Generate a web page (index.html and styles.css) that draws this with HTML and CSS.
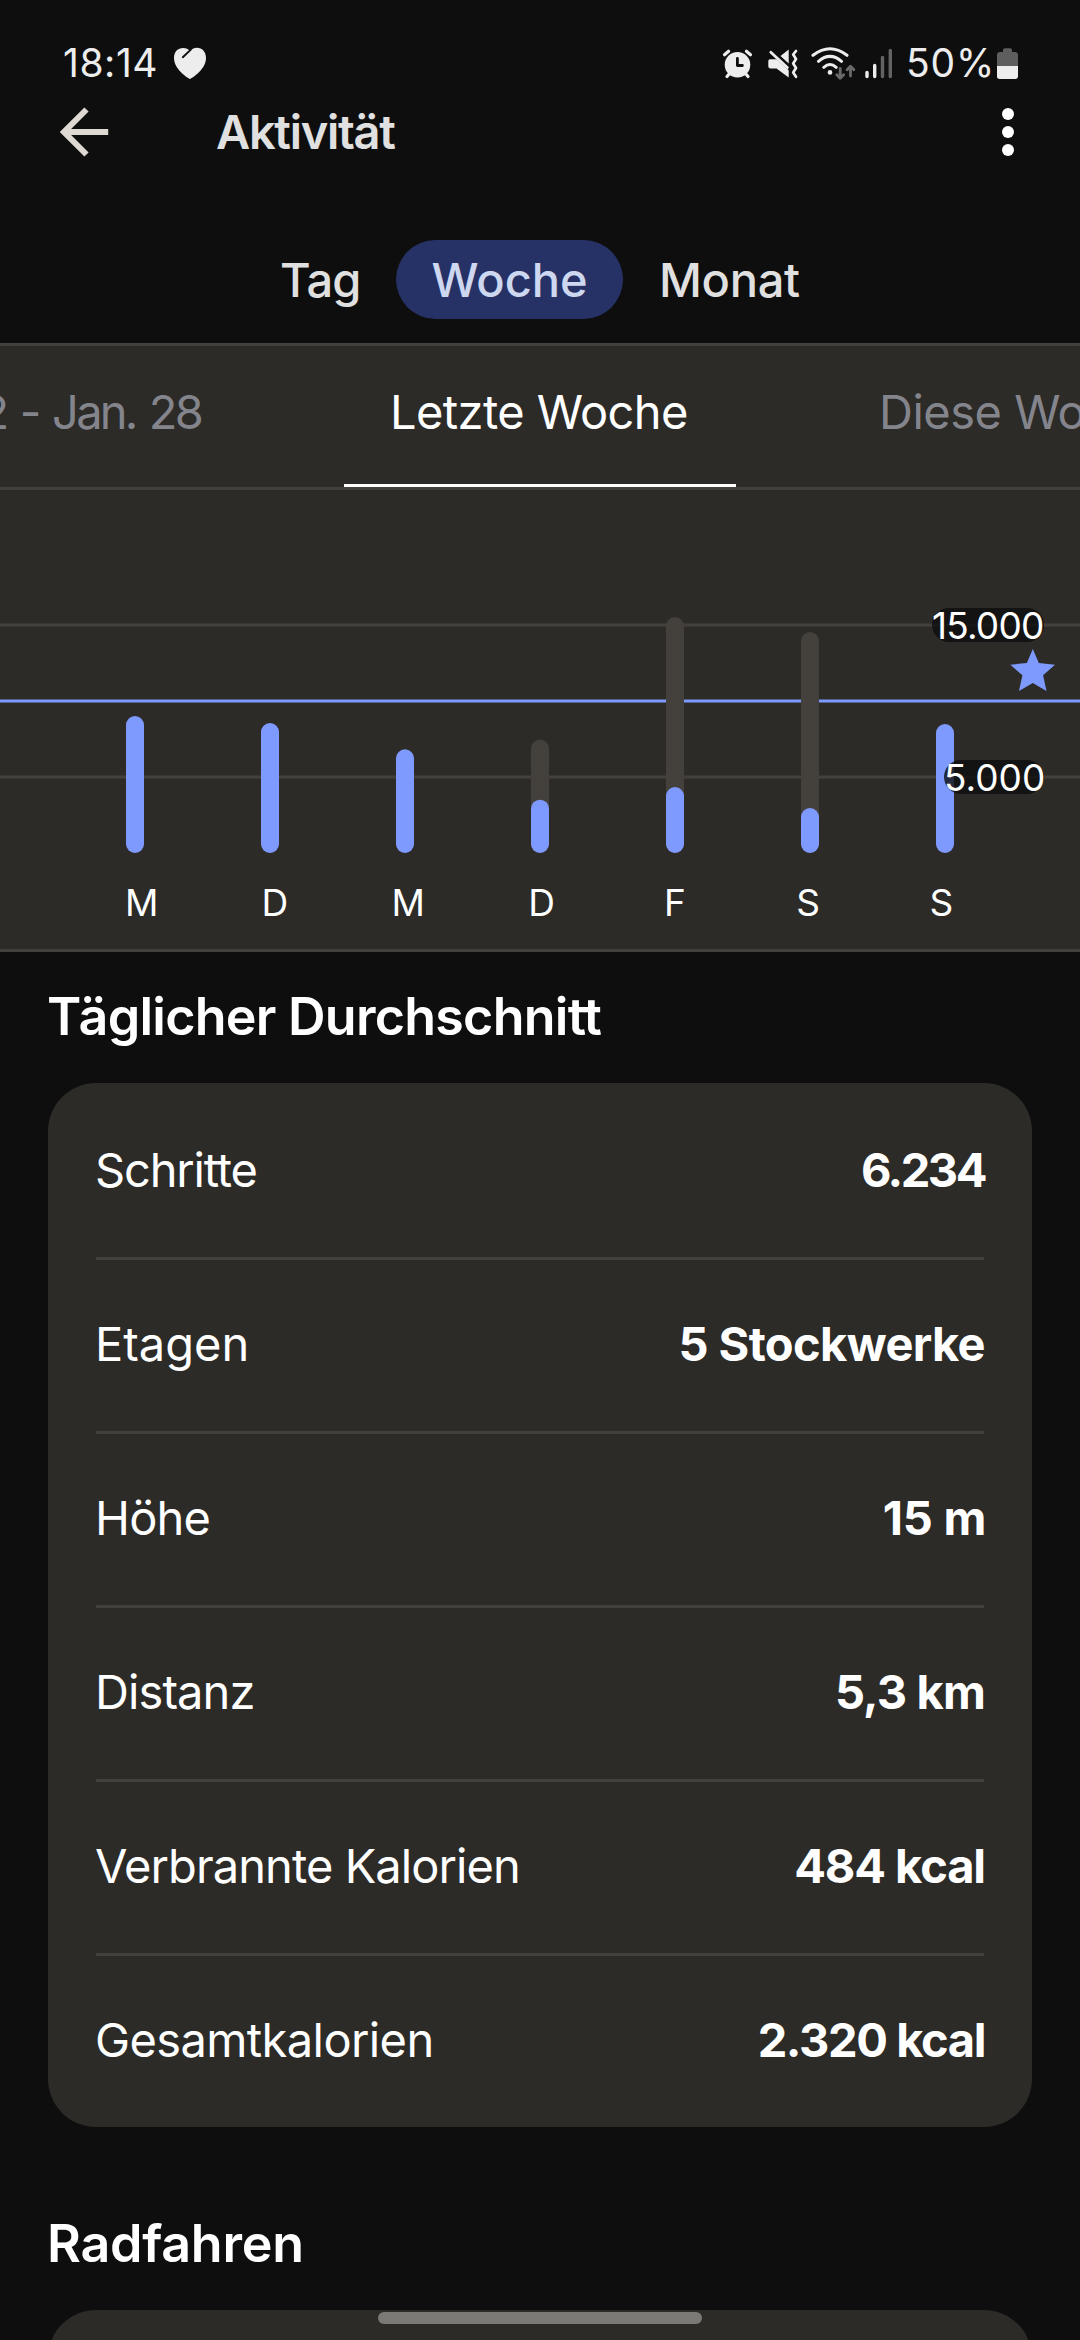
FILE: index.html
```html
<!DOCTYPE html>
<html lang="de">
<head>
<meta charset="utf-8">
<title>Aktivität</title>
<link rel="stylesheet" href="styles.css">
</head>
<body>
<div class="screen">
  <div class="status">
    <span class="clock">18:14</span>
    <svg class="heart" width="34" height="34" viewBox="173 46 34 34">
      <path fill="#ededed" d="M190 79C187 77.500 174 69 174 58C174 51.500 178 48 183 48C186 48 188.500 49 190 51C191.500 49 194 47.700 197 47.700C202 47.700 206 51.500 206 58C206 69 193 77.500 190 79Z"/>
      <path stroke="#0e0e0e" stroke-width="1.900" stroke-linecap="round" fill="none" d="M190.800 49.600L182.800 57.200"/>
    </svg>
    <span class="spacer"></span>
    <svg class="alarm" width="31" height="34" viewBox="722 46 31 34">
      <circle cx="737.500" cy="64.700" r="12.800" fill="#ededed"/>
      <path stroke="#ededed" stroke-width="3.200" stroke-linecap="round" fill="none" d="M724.500 54.800L728.600 51.300M750.500 54.800L746.400 51.300M727 76.500L730 73M748 76.500L745 73"/>
      <path stroke="#0e0e0e" stroke-width="2.800" stroke-linecap="round" stroke-linejoin="round" fill="none" d="M737.400 58.500V65.500H742.400"/>
    </svg>
    <svg class="mute" width="30" height="34" viewBox="768 46 30 34">
      <path fill="#ededed" d="M770 59.200H776.500L788.700 70.300V77.600L776.500 68.500H770.500Q768.300 68.500 768.300 66.300V61Q768.300 59.200 770 59.200ZM780.500 56L788.700 49.500V63.500Z"/>
      <path stroke="#ededed" stroke-width="2.800" stroke-linecap="round" fill="none" d="M770.800 52.300L787.300 67.500"/>
      <path stroke="#ededed" stroke-width="2.700" stroke-linecap="round" stroke-linejoin="round" fill="none" d="M796 51L793.200 54.500L796 59L793.200 63.500L796 68L793.200 72.500L796 76.800"/>
    </svg>
    <svg class="wifi" width="46" height="36" viewBox="811 46 46 36">
      <path stroke="#ededed" stroke-width="3" stroke-linecap="round" fill="none" d="M813 55.300Q830 42.300 847 55.300M818.500 61.300Q830 51.500 841.500 61.300M823.800 67.300Q830 61.800 836.200 67.300"/>
      <circle cx="830" cy="72.400" r="2.300" fill="#ededed"/>
      <path stroke="#6a6a6a" stroke-width="2.800" stroke-linecap="round" stroke-linejoin="round" fill="none" d="M840.200 68.500V78M836.800 74.800L840.200 78.300L843.600 74.800M850.500 76V66.500M847.100 69.800L850.500 66.300L853.900 69.800"/>
    </svg>
    <svg class="signal" width="28" height="34" viewBox="865 46 28 34">
      <g stroke-width="3.400" stroke-linecap="round"><path stroke="#ededed" d="M867 72.500V76.500M874.700 65.500V76.500"/><path stroke="#636363" d="M882.500 57.500V76.500M890.300 50.500V76.500"/></g>
    </svg>
    <span class="percent">50%</span>
    <svg class="battery" width="22" height="34" viewBox="997 46 22 34">
      <path fill="#5e5e5e" d="M1003 52V50Q1003 48.300 1004.700 48.300H1010.300Q1012 48.300 1012 50V52H1015Q1018 52 1018 55V66H997V55Q997 52 1000 52Z"/>
      <path fill="#ededed" d="M997 66H1018V76.300Q1018 79 1015.300 79H999.700Q997 79 997 76.300Z"/>
    </svg>
  </div>

  <header class="appbar">
    <svg width="50" height="50" viewBox="60 107 50 50">
      <path d="M108.200 132H64M86.500 109.500L64 132L86.500 154.500" stroke="#dedad2" stroke-width="6" fill="none"/>
    </svg>
    <h1 class="title">Aktivität</h1>
    <svg class="more" width="12" height="48" viewBox="0 0 12 48" fill="#fff"><circle cx="6" cy="6" r="6"/><circle cx="6" cy="24" r="6"/><circle cx="6" cy="42" r="6"/></svg>
  </header>

  <nav class="range">
    <span class="day">Tag</span>
    <span class="week">Woche</span>
    <span class="month">Monat</span>
  </nav>

  <div class="periods">
    <span class="prev">Jan. 22 - Jan. 28</span>
    <span class="current">Letzte Woche</span>
    <span class="next">Diese Woche</span>
  </div>

  <section class="chart">
    <svg class="plot" width="1080" height="374" viewBox="0 490 1080 374">
      <g fill="#44403c"><rect x="0" y="623.500" width="1080" height="3"/><rect x="0" y="775.500" width="1080" height="3"/></g>
      <rect x="0" y="699.500" width="1080" height="3" fill="#7f9aff"/>
      <g fill="#44403c">
        <rect x="531" y="739.500" width="18" height="113.500" rx="9"/>
        <rect x="666" y="617" width="18" height="236" rx="9"/>
        <rect x="801" y="632" width="18" height="221" rx="9"/>
      </g>
      <g fill="#7f9aff">
        <rect x="126" y="716" width="18" height="137" rx="9"/>
        <rect x="261" y="723" width="18" height="130" rx="9"/>
        <rect x="396" y="749.300" width="18" height="103.700" rx="9"/>
        <rect x="531" y="799.700" width="18" height="53.300" rx="9"/>
        <rect x="666" y="787" width="18" height="66" rx="9"/>
        <rect x="801" y="808" width="18" height="45" rx="9"/>
        <rect x="936" y="724" width="18" height="129" rx="9"/>
        <path d="M1032.800 649L1038.800 663L1055 664.700L1043.100 675.300L1046.500 691L1032.800 683L1019 691L1022.400 675.300L1010.400 664.700L1026.900 663Z"/>
      </g>
    </svg>
    <span class="tick high">15.000</span>
    <span class="tick low">5.000</span>
    <div class="weekdays"><span>M</span><span>D</span><span>M</span><span>D</span><span>F</span><span>S</span><span>S</span></div>
  </section>

  <h2 class="heading average">Täglicher Durchschnitt</h2>
  <dl class="card">
    <div class="row"><dt class="steps">Schritte</dt><dd class="v-steps">6.234</dd></div>
    <div class="row"><dt>Etagen</dt><dd class="v-floors">5 Stockwerke</dd></div>
    <div class="row"><dt class="snug">Höhe</dt><dd class="v-height">15 m</dd></div>
    <div class="row"><dt class="tight">Distanz</dt><dd class="v-distance">5,3 km</dd></div>
    <div class="row"><dt class="burned">Verbrannte Kalorien</dt><dd class="v-burned">484 kcal</dd></div>
    <div class="row"><dt class="total">Gesamtkalorien</dt><dd class="v-total">2.320 kcal</dd></div>
  </dl>

  <h2 class="heading cycling">Radfahren</h2>
  <div class="card next-card"></div>
  <div class="home-bar"></div>
</div>
</body>
</html>
```
FILE: styles.css
```css
* { box-sizing: border-box; margin: 0; padding: 0; }
body { background: #0e0e0e; }
.screen {
  position: relative;
  width: 1080px;
  height: 2340px;
  overflow: hidden;
  background: #0e0e0e;
  color: #fff;
  font-family: Inter, "Liberation Sans", sans-serif;
  font-size: 47px;
  line-height: 1.2;
  white-space: nowrap;
}
svg { display: block; flex: none; }

/* status bar */
.status {
  display: flex;
  align-items: center;
  height: 96px;
  padding: 30px 61px 0 63px;
  color: #ededed;
  font-size: 39px;
}
.clock { width: 110px; letter-spacing: .55px; }
.spacer { flex: 1; }
.mute { margin-left: 15px; }
.wifi { margin: 2px 0 0 13px; }
.signal { margin-left: 8px; }
.percent { width: 91px; margin-left: 13px; letter-spacing: .8px; }

/* title row */
.appbar { display: flex; align-items: center; height: 72px; padding: 0 66px 0 60px; }
.title { margin-left: 106px; font-size: 47px; font-weight: 600; letter-spacing: -1.300px; color: #e0e0e0; }
.more { margin-left: auto; }

/* day / week / month */
.range {
  display: flex;
  height: 175px;
  padding: 72px 0 24px 280px;
  line-height: 80px;
  font-weight: 500;
  color: #e0e0e0;
}
.day { width: 116px; letter-spacing: -.8px; }
.week { width: 227px; height: 79px; padding-left: 35.5px; border-radius: 39.5px; background: #263266; color: #ced7f0; }
.month { margin-left: 36px; letter-spacing: -.3px; }

/* period strip */
.periods {
  display: grid;
  grid-template-columns: 344px 392px 344px;
  height: 147px;
  border-top: 3px solid #44403c;
  border-bottom: 3px solid #44403c;
  background: #2c2b28;
  line-height: 132px;
  color: #84858c;
  overflow: hidden;
}
.prev { justify-self: end; padding-right: 143px; letter-spacing: -2.800px; word-spacing: 3px; }
.current { padding-left: 46px; border-bottom: 3px solid #fff; letter-spacing: -.600px; color: #fff; }
.next { padding-left: 143px; letter-spacing: -.5px; }

/* chart */
.chart { position: relative; height: 462px; background: #2c2b28; border-bottom: 3px solid #44403c; }
.weekdays {
  display: grid;
  grid-template-columns: repeat(7, 133.300px);
  padding-left: 75px;
  line-height: 77px;
  font-size: 37px;
  text-align: center;
}
.tick {
  position: absolute;
  right: 36.500px;
  height: 34px;
  border-radius: 17px;
  background: rgba(14, 14, 14, .8);
  font-size: 37px;
  line-height: 35px;
  text-align: right;
}
.high { top: 118px; width: 111.500px; letter-spacing: -.8px; }
.low { top: 270px; width: 99.500px; }

/* daily average */
.heading { font-size: 52px; font-weight: 600; }
.average { height: 131px; padding-left: 47px; line-height: 129px; letter-spacing: -.75px; }
.card { margin: 0 48px; padding: 3px 48px 0; border-radius: 48px; background: #2c2b28; }
.row {
  display: flex;
  justify-content: space-between;
  height: 174px;
  line-height: 168px;
  border-bottom: 3px solid #44403c;
}
.row:last-child { height: 171px; border-bottom: 0; }
dt { margin-left: -1px; }
dd { font-weight: 700; }
.steps { letter-spacing: -1.18px; }
.snug { letter-spacing: -.8px; }
.tight { letter-spacing: -.9px; }
.burned { letter-spacing: -.92px; }
.total { letter-spacing: -.6px; }
.v-steps { letter-spacing: -2.500px; margin-right: -1px; }
.v-floors { letter-spacing: -.62px; margin-right: -1px; }
.v-distance { letter-spacing: -.86px; margin-right: -1px; }
.v-height { margin-right: -2px; letter-spacing: -.3px; }
.v-burned { letter-spacing: -1.100px; margin-right: -1px; }
.v-total { letter-spacing: -1.400px; margin-right: -1px; }

/* cycling */
.cycling { height: 183px; padding: 52px 0 0 47px; line-height: 129px; letter-spacing: -.25px; }
.next-card { height: 174px; }
.home-bar {
  position: absolute;
  left: 378px;
  bottom: 16px;
  width: 324px;
  height: 12px;
  border-radius: 6px;
  background: #7b7a77;
}
```
